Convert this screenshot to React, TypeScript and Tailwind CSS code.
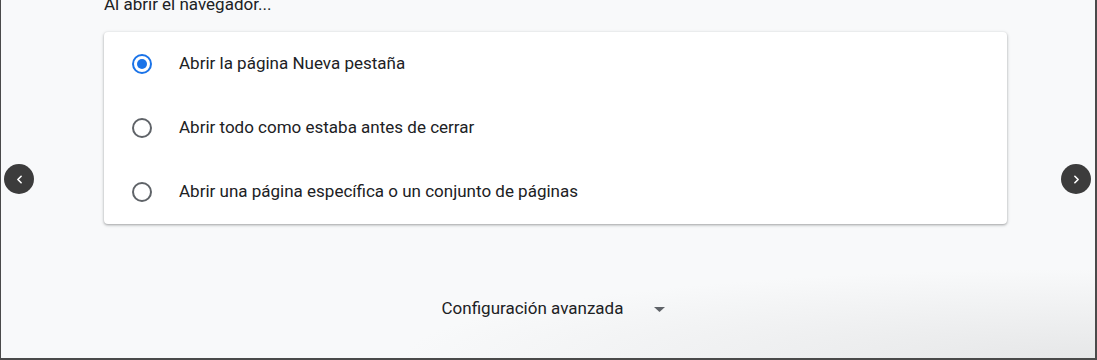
import { ChevronLeft, ChevronRight } from "lucide-react";

const options = [
  "Abrir la página Nueva pestaña",
  "Abrir todo como estaba antes de cerrar",
  "Abrir una página específica o un conjunto de páginas",
];

function Radio({ checked }: { checked: boolean }) {
  return (
    <span
      className={
        "flex h-5 w-5 shrink-0 items-center justify-center rounded-full border-2 " +
        (checked ? "border-[#1a73e8]" : "border-[#5f6368]")
      }
    >
      {checked && <span className="h-2.5 w-2.5 rounded-full bg-[#1a73e8]" />}
    </span>
  );
}

function NavButton({ side }: { side: "left" | "right" }) {
  return (
    <button
      className={
        "absolute top-[164px] flex h-[30px] w-[30px] items-center justify-center rounded-full bg-[#3c3c3c] text-white " +
        (side === "left" ? "left-[3px]" : "left-[1060px]")
      }
    >
      {side === "left" ? (
        <ChevronLeft size={13} strokeWidth={3} />
      ) : (
        <ChevronRight size={13} strokeWidth={3} />
      )}
    </button>
  );
}

export default function App() {
  return (
    <div
      className="relative h-[360px] w-[1097px] overflow-hidden border-b-2 border-l border-r-2 border-[#4a4a4a] bg-[#f8f9fa] text-[#202124]"
      style={{ fontFamily: "Roboto, 'Liberation Sans', sans-serif" }}
    >
      {/* sombra suave abajo a la derecha */}
      <div className="pointer-events-none absolute bottom-0 right-0 h-[90px] w-[700px] bg-[radial-gradient(ellipse_at_bottom_right,#e6e7e8,transparent_70%)]" />

      <div className="relative flex flex-col pl-[103px] pr-[88px]">
        <div className="-mt-[6px] h-[38px] text-[17px] leading-[20px]">Al abrir el navegador...</div>

        <div className="flex flex-col rounded-[4px] bg-white shadow-[0_1px_2px_rgba(60,64,67,0.3),0_1px_3px_1px_rgba(60,64,67,0.15)]">
          {options.map((label, i) => (
            <div key={label} className="flex h-16 items-center pl-[28px]">
              <Radio checked={i === 0} />
              <span className="ml-[27px] text-[17px]">{label}</span>
            </div>
          ))}
        </div>

        <div className="mt-[72px] flex items-center justify-center pr-[4px]">
          <span className="text-[17px]">Configuración avanzada</span>
          <svg width="11" height="5" viewBox="0 0 11 5" className="ml-[31px] mt-[2px]">
            <path d="M0 0 L11 0 L5.5 5 Z" fill="#5f6368" />
          </svg>
        </div>
      </div>

      <NavButton side="left" />
      <NavButton side="right" />
    </div>
  );
}
